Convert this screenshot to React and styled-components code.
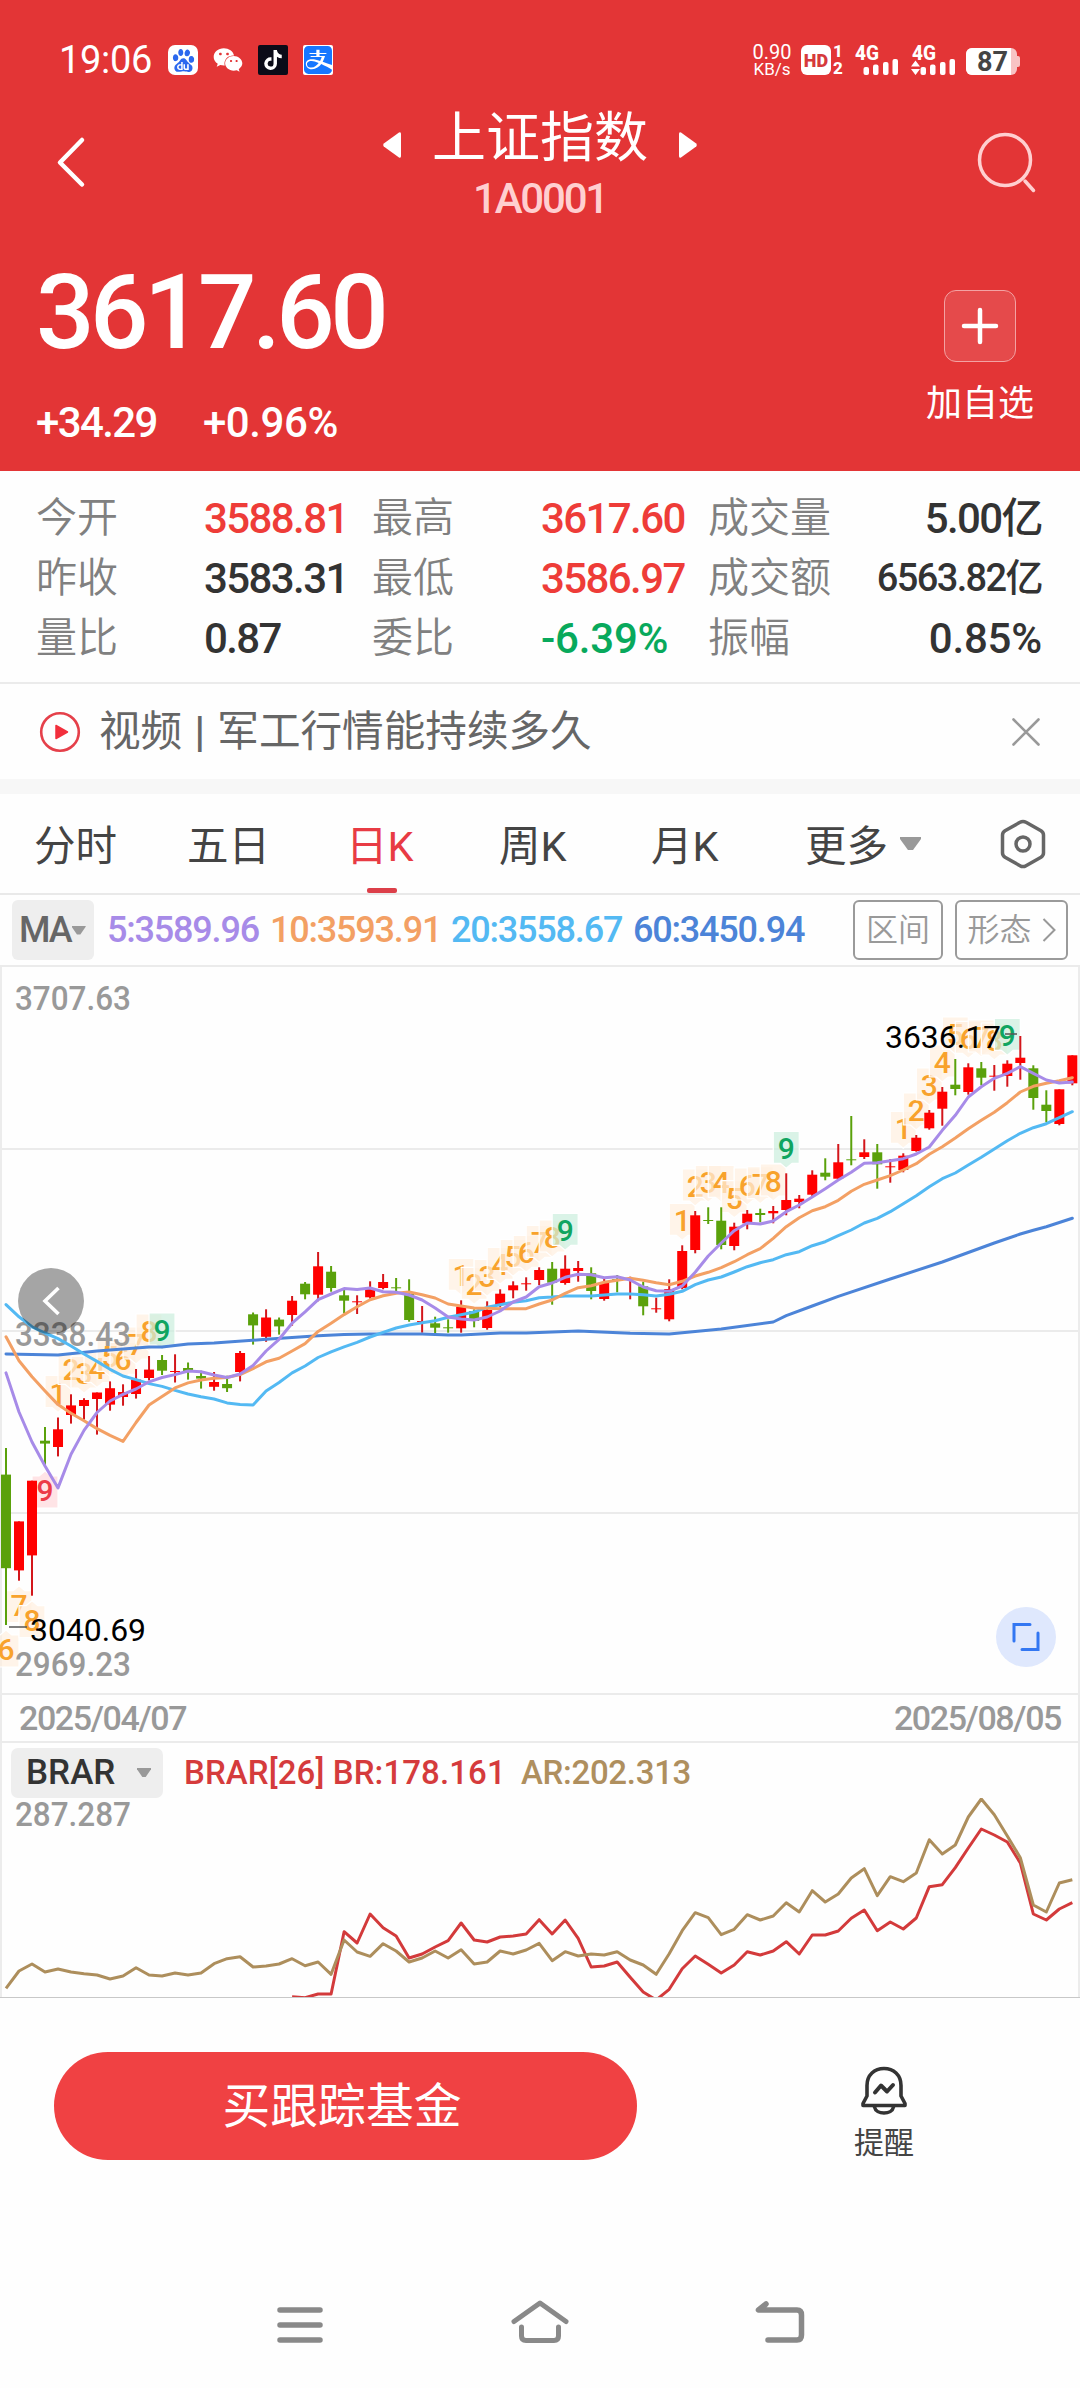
import React from 'react'
import styled, { createGlobalStyle } from 'styled-components'
import { SiBaidu } from 'react-icons/si'
import { FaWeixin, FaTiktok, FaAlipay } from 'react-icons/fa6'

const UP = '#ff0000'
const DOWN = '#5aa10b'

// [direction, high, body top, body bottom, low]
const candles = [
  ['d', 1448, 1474.6, 1568.2, 1625], ['u', 1521.4, 1521.4, 1570.4, 1580.7], ['u', 1480.7, 1480.7, 1555.4, 1595.7],
  ['d', 1427, 1440.7, 1443.6, 1466], ['u', 1417.5, 1429.3, 1447, 1456.4], ['u', 1394.3, 1405.4, 1415, 1423.6],
  ['u', 1398.2, 1400, 1406, 1419.6], ['u', 1392.5, 1392.5, 1399, 1434.6], ['u', 1381.4, 1388.2, 1404.6, 1410.7],
  ['u', 1384.3, 1392, 1397, 1405.7], ['u', 1369, 1379.6, 1394, 1398.6], ['u', 1356, 1369.6, 1378, 1380.4],
  ['d', 1355, 1360, 1370.7, 1375], ['u', 1354.3, 1371, 1372, 1382.5], ['d', 1362.5, 1368, 1371, 1379.6],
  ['d', 1370.7, 1376, 1378.6, 1388.6], ['u', 1372, 1382, 1386.8, 1390.7], ['d', 1375.7, 1384, 1388.2, 1392],
  ['u', 1351, 1353, 1372, 1381.4], ['d', 1312.5, 1314.3, 1325.4, 1344.6], ['u', 1309.3, 1317.5, 1336.8, 1341.8],
  ['d', 1317.5, 1319.6, 1326.4, 1334.6], ['u', 1296, 1300.7, 1315, 1325.7], ['d', 1282, 1283.7, 1294.3, 1299.3],
  ['u', 1252, 1266.3, 1294.7, 1301.3], ['d', 1266, 1271.7, 1288, 1291.7], ['d', 1290, 1295.3, 1300.7, 1313.3],
  ['u', 1295.3, 1301.3, 1302.3, 1314], ['u', 1281.3, 1288.3, 1297.3, 1298.7], ['u', 1274, 1282, 1288, 1289.3],
  ['d', 1278, 1287.3, 1288.3, 1291.7], ['d', 1279.3, 1294, 1320, 1321.7], ['u', 1306, 1321, 1321.7, 1332.7],
  ['d', 1316.7, 1323.3, 1327.7, 1335.3], ['d', 1319.3, 1327.3, 1328.3, 1332.7], ['u', 1300.3, 1306.7, 1328.3, 1332.7],
  ['d', 1309.3, 1311, 1321, 1327.3], ['u', 1301.3, 1310, 1328, 1329.7], ['u', 1289.3, 1293.7, 1305, 1307.3],
  ['u', 1281.3, 1285.3, 1290.3, 1298.3], ['u', 1277.3, 1283.3, 1284.3, 1290.7], ['u', 1267.3, 1270, 1280, 1285],
  ['d', 1262, 1268.7, 1282.7, 1304.7], ['u', 1255.3, 1268.7, 1283, 1284.7], ['u', 1261, 1268, 1271, 1281.7],
  ['d', 1267.3, 1273.3, 1291, 1299.3], ['u', 1278.3, 1282.3, 1299, 1300.7], ['d', 1275, 1279, 1280, 1292.3],
  ['u', 1276.7, 1278, 1279.7, 1299.3], ['d', 1281.7, 1286.3, 1306.3, 1315.3], ['u', 1297.7, 1308.3, 1309.3, 1312.7],
  ['u', 1279.3, 1289, 1319.3, 1321.3], ['u', 1245.3, 1251, 1288, 1289.3], ['u', 1211, 1215.3, 1250, 1253.3],
  ['d', 1207.3, 1220, 1221, 1224], ['d', 1207.3, 1220.7, 1245, 1249.3], ['u', 1222.7, 1226.7, 1246, 1250.3],
  ['u', 1210, 1213.7, 1223.3, 1229.3], ['d', 1208.7, 1213, 1215, 1222.3], ['u', 1206, 1211, 1213.3, 1223.3],
  ['u', 1173.3, 1200, 1210, 1215.3], ['u', 1195, 1198.7, 1202, 1208.3], ['u', 1170.3, 1174.7, 1194.7, 1196.7],
  ['d', 1158.3, 1172.7, 1176.7, 1180.3], ['u', 1144, 1162.3, 1178.7, 1179.5], ['d', 1116, 1159.3, 1160.3, 1165.3],
  ['u', 1139.3, 1152.3, 1157, 1159], ['d', 1144, 1152.3, 1164.3, 1188.7], ['u', 1159, 1166.3, 1167.3, 1182.7],
  ['u', 1153.3, 1155.7, 1170, 1172.3], ['u', 1135, 1137.7, 1151, 1151.7], ['u', 1110, 1112.7, 1128.3, 1129.7],
  ['u', 1087, 1091.7, 1108.7, 1125.7], ['d', 1059, 1084.7, 1089, 1095.3], ['u', 1063.3, 1067.3, 1092, 1094.7],
  ['d', 1062, 1068.3, 1077.7, 1085.3], ['u', 1065, 1075.7, 1076.7, 1090.7], ['u', 1060.3, 1063.7, 1076, 1086.7],
  ['u', 1036, 1057.7, 1063, 1079.7], ['d', 1065.3, 1068.3, 1098, 1109.7], ['d', 1090.3, 1104.7, 1111, 1122.3],
  ['u', 1089.3, 1089.3, 1124, 1125.3], ['u', 1055.3, 1055.3, 1083.3, 1085.3],
]

const ma5 = [
  1372.9, 1412, 1442, 1466, 1487.9, 1454.3, 1430.4, 1412.5, 1401, 1394.3, 1389, 1381.8, 1377.5, 1374.6, 1371, 1371.8,
  1375, 1377.5, 1374, 1365.4, 1351, 1339.3, 1323.2, 1311.8, 1299.6, 1294, 1288.6, 1289.6, 1288, 1291.7, 1292.3, 1295,
  1300, 1308, 1317, 1319, 1320, 1317, 1311, 1302, 1297, 1286.7, 1283, 1277.3, 1274.3, 1274.7, 1277.7, 1276.7,
  1280, 1287, 1290.7, 1291.3, 1286, 1272.3, 1256, 1243, 1230.7, 1223, 1224, 1221, 1211.7, 1205, 1197, 1188.7,
  1180, 1172.3, 1163.3, 1162.7, 1160.7, 1158.7, 1154, 1147, 1130.3, 1115.3, 1097, 1086.7, 1078.3, 1073.3, 1066.7,
  1073.3, 1080, 1083, 1082,
]
const ma10 = [
  1336.8, 1360.7, 1376.8, 1391, 1404.6, 1413.2, 1420.7, 1428.6, 1435.4, 1441.4, 1422.5, 1405, 1396.4, 1387.9, 1382.9,
  1380, 1378.2, 1377.5, 1374.6, 1368.6, 1361.8, 1358.2, 1351, 1343.6, 1331.4, 1323.2, 1314.6, 1306.7, 1299.7, 1295.7,
  1293.3, 1292, 1294.7, 1298, 1304, 1306, 1308, 1308.3, 1308.7, 1308.7, 1308.7, 1304, 1300, 1293.3, 1287.7, 1285.7,
  1282.3, 1280.3, 1278.3, 1280.3, 1282.7, 1284.7, 1281.3, 1276, 1272.3, 1267.7, 1261.7, 1254.7, 1248.7, 1238.3,
  1226.7, 1217.7, 1210.7, 1206.7, 1200.3, 1191.3, 1184.3, 1180, 1175.7, 1170, 1163.7, 1154.3, 1146.7, 1138, 1128.7,
  1120.3, 1112.3, 1102.7, 1092, 1086.3, 1083.3, 1080.7, 1077.7,
]
const ma20 = [
  1304.6, 1316.8, 1326.8, 1333, 1338.6, 1346, 1354, 1361.4, 1369.3, 1376, 1379.6, 1383.6, 1386.4, 1390.4, 1394, 1396.8,
  1399, 1402.9, 1404.6, 1405, 1391, 1382.5, 1372.9, 1366, 1357.5, 1351.8, 1346.8, 1342.3, 1337, 1332.3, 1328, 1325,
  1322.7, 1320.7, 1317.3, 1314.7, 1312, 1307.3, 1304.7, 1302.3, 1300.7, 1297.7, 1297, 1296, 1296, 1296, 1295, 1294,
  1294, 1294.7, 1296, 1294.3, 1291.3, 1284.7, 1280, 1277, 1272, 1266.7, 1262.7, 1259.7, 1254.7, 1251.7, 1245.7,
  1241.7, 1235.7, 1230, 1223, 1218.3, 1211.7, 1203.7, 1195.7, 1186.7, 1178.7, 1173, 1165, 1157.3, 1149, 1140.7,
  1133.3, 1127.7, 1123.7, 1117.7, 1111.7,
]
const ma60 = [
  [0, 1354], [4, 1355], [7, 1351], [11, 1347], [12, 1347], [14, 1344], [16, 1343], [20, 1339.3], [24, 1335.7],
  [26, 1334.6], [28, 1334], [32, 1334], [34, 1335], [35, 1335], [38, 1333], [40, 1333], [42, 1332], [44, 1331],
  [48, 1333.3], [51, 1334], [55, 1329], [59, 1322], [60, 1315.7], [62, 1306], [64, 1296.3], [68, 1279], [72, 1262],
  [76, 1243], [78, 1234], [79, 1230.3], [80, 1226.7], [82, 1218.3],
]
const ar = [
  1988.3, 1971, 1964, 1972, 1969, 1972, 1973.7, 1975, 1979, 1976, 1967.7, 1975, 1976, 1973, 1975, 1973, 1963.7, 1958.7,
  1956.7, 1967, 1966, 1964, 1958.7, 1965.7, 1962, 1974.3, 1940, 1952, 1956.3, 1943.7, 1951, 1962, 1958, 1951, 1958,
  1949.7, 1964, 1962, 1951, 1954, 1950, 1943.3, 1960.7, 1951.7, 1956, 1954, 1955, 1951.7, 1960, 1965, 1974.3, 1953.7,
  1930.7, 1912.7, 1917.7, 1934.7, 1929.3, 1914.7, 1920, 1916, 1902.7, 1912, 1890.7, 1902, 1894, 1878, 1868.7, 1895.7,
  1876.7, 1881.7, 1873, 1839.7, 1854, 1845, 1817, 1799, 1814.7, 1836, 1857.7, 1905, 1912, 1883, 1879.7,
]
const br = [
  1996.7, 1997.7, 1994, 1994, 1931.7, 1943, 1914, 1927.7, 1936, 1958, 1954, 1947, 1940.7, 1923, 1940, 1942, 1937, 1936,
  1934, 1919.7, 1934, 1920, 1938.3, 1967, 1966, 1962, 1977.3, 1992, 2000, 1989.3, 1968.7, 1956, 1964.3, 1973, 1965,
  1951.7, 1955, 1951, 1941.7, 1954, 1935, 1935, 1931, 1918.3, 1910, 1930.7, 1922, 1929, 1918, 1886.7, 1884.7, 1867.7,
  1848, 1829, 1835, 1842, 1863, 1914, 1920, 1909, 1902.7,
]

const markers = [
  { i: 0, n: 6, below: true },
  { i: 1, n: 7, below: true },
  { i: 2, n: 8, below: true },
  { i: 3, n: 9, below: true },
]
;[4, 35, 52, 69].forEach((start) => {
  for (let k = 0; k < 9; k++) markers.push({ i: start + k, n: k + 1 })
})

const xAt = (i) => 6 + i * 13.004
const toPoints = (list, from = 0) => list.map((y, i) => `${xAt(i + from)},${y}`).join(' ')

const quotes = [
  { label: '今开', value: '3588.81', color: '#ee3c38' },
  { label: '最高', value: '3617.60', color: '#ee3c38' },
  { label: '成交量', value: '5.00亿', end: true },
  { label: '昨收', value: '3583.31' },
  { label: '最低', value: '3586.97', color: '#ee3c38' },
  { label: '成交额', value: '6563.82亿', end: true, small: true },
  { label: '量比', value: '0.87' },
  { label: '委比', value: '-6.39%', color: '#08a95c', wide: true },
  { label: '振幅', value: '0.85%', end: true, wide: true },
]

const averages = [
  { text: '5:3589.96', color: '#a78be8', width: 163 },
  { text: '10:3593.91', color: '#f3a064', width: 181 },
  { text: '20:3558.67', color: '#53b9f3', width: 182 },
  { text: '60:3450.94', color: '#4c84d8', width: 180 },
]

const Marker = ({ i, n, below }) => {
  const x = xAt(i)
  const tip = below ? candles[i][4] + 5 : candles[i][1] - 5
  const s = below ? -1 : 1
  const fill = n < 9 ? '#fff0e0' : below ? '#ffd9dc' : '#caeedd'
  const color = n < 9 ? '#f8a22c' : below ? '#ec3b48' : '#10a560'
  const d = `M${x} ${tip}l-6 ${-5 * s}h-7v${-32 * s}h26v${32 * s}h-7z`
  return (
    <g>
      <path d={d} fill={fill} fillOpacity="0.7" stroke="#fff" strokeWidth="1.2" strokeLinejoin="round" />
      <MarkerText x={x} y={tip - 19.5 * s + 10.5} fill={color}>{n}</MarkerText>
    </g>
  )
}

const Candle = ({ i, data }) => {
  const [dir, high, top, bottom, low] = data
  const color = dir === 'u' ? UP : DOWN
  const x = xAt(i)
  return (
    <g>
      <line x1={x} x2={x} y1={high} y2={low} stroke={dir === 'u' ? '#d3161b' : color} strokeWidth="2" />
      <rect x={x - 5} y={top} width="10" height={Math.max(bottom - top, 1)} fill={color} />
    </g>
  )
}

const KLineChart = () => (
  <ChartSvg viewBox="0 967 1080 728" width="1080" height="728">
    {[1149, 1331, 1513].map((y) => (
      <line key={y} x1="0" x2="1080" y1={y} y2={y} stroke="#ebebeb" strokeWidth="2" />
    ))}
    <path d="M1 967V1695M1079 967V1695" stroke="#ececec" strokeWidth="2" />
    {markers.map((m) => <Marker key={m.i} {...m} />)}
    {candles.map((c, i) => <Candle key={i} i={i} data={c} />)}
    <AxisText x="15" y="1010" textLength="116" lengthAdjust="spacingAndGlyphs">3707.63</AxisText>
    <AxisText x="15" y="1346" textLength="116" lengthAdjust="spacingAndGlyphs">3338.43</AxisText>
    <AxisText x="15" y="1676" textLength="116" lengthAdjust="spacingAndGlyphs">2969.23</AxisText>
    <g fill="none" strokeWidth="3" strokeLinejoin="round" strokeLinecap="round">
      <polyline points={ma60.map(([i, y]) => `${xAt(i)},${y}`).join(' ')} stroke="#4c84d8" />
      <polyline points={toPoints(ma20)} stroke="#53b9f3" />
      <polyline points={toPoints(ma10)} stroke="#f3a064" />
      <polyline points={toPoints(ma5)} stroke="#a78be8" />
    </g>
    <path d="M9 1627h18M1005 1034h12" stroke="#555" strokeWidth="1.5" />
    <PeakText x="30" y="1640.5" textLength="116" lengthAdjust="spacingAndGlyphs">3040.69</PeakText>
    <PeakText x="885" y="1048" textLength="116" lengthAdjust="spacingAndGlyphs">3636.17</PeakText>
  </ChartSvg>
)

const BrarChart = () => (
  <ChartSvg viewBox="0 1798 1080 199" width="1080" height="199">
    <path d="M1 1798V1997M1079 1798V1997" stroke="#ececec" strokeWidth="2" />
    <AxisText x="15" y="1825.5" textLength="116" lengthAdjust="spacingAndGlyphs">287.287</AxisText>
    <g fill="none" strokeWidth="3" strokeLinejoin="round">
      <polyline points={toPoints(br, 22)} stroke="#d33a3b" />
      <polyline points={toPoints(ar)} stroke="#ad8e5c" />
    </g>
  </ChartSvg>
)

const Signal = ({ arrows }) => (
  <svg width="46" height="34" viewBox="0 -4 46 34" fill="#fff">
    <SignalText x="1" y="14.500" textLength="24" lengthAdjust="spacingAndGlyphs">4G</SignalText>
    <rect x="9.500" y="22" width="5.500" height="8" rx="2" />
    <rect x="19" y="19.500" width="5.500" height="10.500" rx="2" />
    <rect x="29" y="17" width="5.500" height="13" rx="2" />
    <rect x="38.500" y="14" width="5.500" height="16" rx="2" />
    {arrows && <path d="M4.500 15.500l4.500 6h-9zM4.500 30l4.500-6h-9z" />}
  </svg>
)

export default function App() {
  return (
    <>
      <GlobalStyle />
      <Page>
        <Header>
          <StatusBar>
            <Clock>19:06</Clock>
            <AppIcon $bg="#fff" $color="#2c68ee"><SiBaidu size={23} /></AppIcon>
            <AppIcon $color="#fff"><FaWeixin size={30} /></AppIcon>
            <AppIcon $bg="#0b0b18" $color="#fff" $square><FaTiktok size={20} /></AppIcon>
            <AppIcon $bg="#fff" $color="#1677ff" $square><FaAlipay size={32} /></AppIcon>
            <NetSpeed><span>0.90</span><small>KB/s</small></NetSpeed>
            <HdBadge>HD</HdBadge>
            <SimNumbers><span>1</span><span>2</span></SimNumbers>
            <SignalSlot $width={57}><Signal /></SignalSlot>
            <SignalSlot $width={55}><Signal arrows /></SignalSlot>
            <Battery><BatteryLevel>87</BatteryLevel></Battery>
          </StatusBar>
          <NavBar>
            <svg width="32" height="54" viewBox="0 0 32 54" fill="none" stroke="#fff" strokeWidth="4.500" strokeLinecap="round" strokeLinejoin="round">
              <path d="M27 5L5 27.500L27 49.500" />
            </svg>
            <TitleBlock>
              <TitleRow>
                <svg width="20" height="28" viewBox="0 0 20 28" fill="#fff"><path d="M17 1.500Q19 .5 19 3V25Q19 27.500 17 26.500L1.800 15.500Q.5 14 1.800 12.500z" /></svg>
                <Title>上证指数</Title>
                <svg width="20" height="28" viewBox="0 0 20 28" fill="#fff"><path d="M3 1.500Q1 .5 1 3V25Q1 27.500 3 26.500L18.200 15.500Q19.500 14 18.200 12.500z" /></svg>
              </TitleRow>
              <Code>1A0001</Code>
            </TitleBlock>
            <svg width="62" height="62" viewBox="0 0 62 62" fill="none" stroke="#ffcfd0" strokeWidth="3.500" strokeLinecap="round">
              <ellipse cx="29" cy="29" rx="25.500" ry="25.500" />
              <path d="M49 50L57.500 59.500" />
            </svg>
          </NavBar>
          <PriceArea>
            <div>
              <Price>3617.60</Price>
              <Changes><Change>+34.29</Change><Change $wide>+0.96%</Change></Changes>
            </div>
            <AddStock>
              <AddIcon>
                <svg width="38" height="38" viewBox="0 0 38 38" stroke="#fff" strokeWidth="4.500" strokeLinecap="round"><path d="M19 3V35M3 19H35" /></svg>
              </AddIcon>
              加自选
            </AddStock>
          </PriceArea>
        </Header>

        <Quotes>
          {quotes.map((q) => (
            <React.Fragment key={q.label}>
              <QuoteLabel>{q.label}</QuoteLabel>
              <QuoteValue $color={q.color} $end={q.end} $small={q.small} $wide={q.wide}>{q.value}</QuoteValue>
            </React.Fragment>
          ))}
        </Quotes>

        <VideoBar>
          <svg width="42" height="42" viewBox="0 0 42 42">
            <circle cx="21" cy="21" r="18.800" fill="none" stroke="#e5404a" strokeWidth="2.600" />
            <path d="M17 14.500L28.500 21L17 27.500z" fill="#f22f3c" stroke="#f22f3c" strokeWidth="1.500" strokeLinejoin="round" />
          </svg>
          <VideoTitle>视频 <b>|</b> 军工行情能持续多久</VideoTitle>
          <svg width="30" height="30" viewBox="0 0 30 30" stroke="#999" strokeWidth="2.600" strokeLinecap="round"><path d="M2.500 2.500L27.500 27.500M27.500 2.500L2.500 27.500" /></svg>
        </VideoBar>

        <Tabs>
          <Tab $width={153}>分时</Tab>
          <Tab $width={159}>五日</Tab>
          <Tab $width={153} $active>日K</Tab>
          <Tab $width={152}>周K</Tab>
          <Tab $width={154}>月K</Tab>
          <Tab $width={95}>更多</Tab>
          <Caret $w={21} $h={13} />
          <SettingIcon width="46" height="50" viewBox="0 0 46 50" fill="none" stroke="#666" strokeWidth="3.500" strokeLinejoin="round">
            <path d="M20 3.300Q23 1.500 26 3.300L41 11.800Q43.500 13.500 43.500 16V34Q43.500 36.500 41 38.200L26 46.700Q23 48.500 20 46.700L5 38.200Q2.500 36.500 2.500 34V16Q2.500 13.500 5 11.800z" />
            <circle cx="23" cy="25" r="7" />
          </SettingIcon>
        </Tabs>

        <MaRow>
          <MaSelect>MA<Caret $w={14} $h={9} /></MaSelect>
          {averages.map((a) => (
            <Average key={a.text} $color={a.color} $width={a.width}>{a.text}</Average>
          ))}
          <OutlineButton $width={90}>区间</OutlineButton>
          <OutlineButton $width={113}>
            形态
            <svg width="14" height="28" viewBox="0 0 14 28" fill="none" stroke="#999" strokeWidth="2"><path d="M1.500 3L12.500 14L1.500 25" /></svg>
          </OutlineButton>
        </MaRow>

        <ChartPanel>
          <KLineChart />
          <PrevButton>
            <svg width="22" height="34" viewBox="0 0 22 34" fill="none" stroke="#fff" strokeWidth="3.600"><path d="M18.500 4L5 17L18.500 30" /></svg>
          </PrevButton>
          <ExpandButton>
            <svg width="30" height="30" viewBox="0 0 30 30" fill="none" stroke="#3377f2" strokeWidth="3" strokeLinecap="round"><path d="M3 19V2.500H19M27 11V27.500H11" /></svg>
          </ExpandButton>
        </ChartPanel>
        <DateRow><span>2025/04/07</span><span>2025/08/05</span></DateRow>

        <BrarHead>
          <BrarSelect>BRAR<Caret $w={14} $h={9} /></BrarSelect>
          <BrarText $color="#d53b3c" $width={337} $spacing={0.1}>BRAR[26] BR:178.161</BrarText>
          <BrarText $color="#af8f5e" $spacing={-0.3}>AR:202.313</BrarText>
        </BrarHead>
        <BrarPanel><BrarChart /></BrarPanel>

        <ActionBar>
          <BuyButton>买跟踪基金</BuyButton>
          <Remind>
            <svg width="50" height="52" viewBox="0 0 50 52" fill="none" stroke="#333" strokeWidth="3.600" strokeLinejoin="round" strokeLinecap="round">
              <path d="M8 20.500C8 10 15.500 3.500 25 3.500S42 10 42 20.500V31L46 38.500V40.500H4V38.500L8 31z" />
              <path d="M15.500 42C17 50 33 50 34.500 42" />
              <path d="M16 27.500L22 20.500L28 26.500L34 20" strokeWidth="4" />
            </svg>
            提醒
          </Remind>
        </ActionBar>

        <SystemNav>
          <svg width="60" height="54" viewBox="0 0 60 54" stroke="#898989" strokeWidth="5.500" strokeLinecap="round"><path d="M10 12H50M10 27H50M10 42H50" /></svg>
          <svg width="60" height="54" viewBox="0 0 60 54" fill="none" stroke="#898989" strokeWidth="5" strokeLinecap="round" strokeLinejoin="round"><path d="M4 23.500L30 5L56 23.500M11.500 29V38Q11.500 42.500 16 42.500H44Q48.500 42.500 48.500 38V29" /></svg>
          <svg width="60" height="54" viewBox="0 0 60 54" fill="none" stroke="#898989" strokeWidth="5.500" strokeLinecap="round" strokeLinejoin="round"><path d="M16 6L8.500 12H47Q51.500 12 51.500 17V37Q51.500 42 47 42H18" /></svg>
        </SystemNav>
      </Page>
    </>
  )
}

const GlobalStyle = createGlobalStyle`
  * { box-sizing: border-box; }
  body {
    margin: 0;
    background: #fefefe;
  }
  svg { display: block; flex: none; }
`
const Page = styled.div`
  width: 1080px;
  height: 2388px;
  display: flex;
  flex-direction: column;
  overflow: hidden;
  background: #fefefe;
  color: #444;
  font-family: Roboto, 'Noto Sans CJK SC', sans-serif;
`
const Header = styled.header`
  height: 471px;
  background: #e33536;
  color: #fff;
`
const StatusBar = styled.div`
  height: 90px;
  padding: 30px 58px 0 59px;
  display: flex;
  align-items: center;
`
const Clock = styled.div`
  width: 109px;
  font-size: 38px;
  letter-spacing: -0.3px;
`
const AppIcon = styled.span`
  width: 30px;
  height: 30px;
  margin-right: 15px;
  display: flex;
  flex: none;
  align-items: center;
  justify-content: center;
  overflow: hidden;
  border-radius: ${(p) => (p.$square ? '2px' : '7px')};
  background: ${(p) => p.$bg || 'transparent'};
  color: ${(p) => p.$color};
`
const NetSpeed = styled.div`
  width: 46px;
  margin-left: auto;
  display: flex;
  flex-direction: column;
  align-items: center;
  font-size: 20px;
  line-height: 17px;
  small {
    font-size: 17px;
    line-height: 16px;
  }
`
const HdBadge = styled.div`
  width: 30px;
  height: 30px;
  margin-left: 6px;
  border-radius: 6px;
  background: #fff;
  color: #d63a3c;
  font-size: 18px;
  font-weight: 900;
  line-height: 31px;
  text-align: center;
`
const SimNumbers = styled.div`
  width: 12px;
  margin: 0 10px 0 1px;
  display: flex;
  flex-direction: column;
  align-items: center;
  font-size: 17px;
  font-weight: 800;
  line-height: 17px;
`
const SignalSlot = styled.div`
  width: ${(p) => p.$width}px;
  margin-top: -4px;
  flex: none;
`
const SignalText = styled.text`
  font: 800 20px Roboto, sans-serif;
`
const Battery = styled.div`
  width: 51px;
  height: 27px;
  margin: 2px 5px 0 0;
  border-radius: 6px;
  background: #f8c3c4;
  position: relative;
  &::after {
    content: '';
    position: absolute;
    right: -3px;
    top: 8px;
    width: 3px;
    height: 11px;
    border-radius: 0 2px 2px 0;
    background: #f8c3c4;
  }
`
const BatteryLevel = styled.div`
  width: 45px;
  height: 27px;
  padding-left: 8px;
  border-radius: 6px 0 0 6px;
  background: #fff;
  color: #444;
  font-size: 27px;
  font-weight: 700;
  line-height: 28px;
  text-align: center;
`
const NavBar = styled.nav`
  height: 150px;
  padding: 18px 42px 0 55px;
  display: flex;
  align-items: flex-start;
  justify-content: space-between;
  > svg:first-child { margin: 27px 30px 0 0; }
  > svg:last-child { margin-top: 23px; }
`
const TitleBlock = styled.div`
  display: flex;
  flex-direction: column;
  align-items: center;
  margin-left: -13px;
`
const TitleRow = styled.div`
  display: flex;
  svg { margin-top: 23px; }
`
const Title = styled.h1`
  margin: 0 30px;
  font-size: 54px;
  font-weight: 400;
  line-height: 62px;
`
const Code = styled.div`
  margin-top: 9px;
  font-size: 42px;
  font-weight: 500;
  line-height: 40px;
  letter-spacing: -2.2px;
  color: #ffcfd0;
`
const PriceArea = styled.section`
  padding: 17px 46px 0 36px;
  display: flex;
  justify-content: space-between;
`
const Price = styled.div`
  font-size: 103px;
  font-weight: 500;
  line-height: 111px;
  letter-spacing: -4.5px;
`
const Changes = styled.div`
  margin-top: 30px;
  display: flex;
  gap: 46px;
`
const Change = styled.span`
  font-size: 42px;
  font-weight: 500;
  line-height: 50px;
  letter-spacing: ${(p) => (p.$wide ? -0.4 : -1.6)}px;
`
const AddStock = styled.div`
  padding-top: 33px;
  display: flex;
  flex-direction: column;
  align-items: center;
  font-size: 36px;
  line-height: 45px;
`
const AddIcon = styled.div`
  width: 72px;
  height: 72px;
  margin-bottom: 20px;
  display: flex;
  align-items: center;
  justify-content: center;
  border: 1.5px solid #f3a2a3;
  border-radius: 12px;
  background: #e54a4b;
`
const Quotes = styled.section`
  height: 213px;
  padding: 17px 38px 0 37px;
  display: grid;
  grid-template-columns: 167px 169px 168px 168px 130px 1fr;
  grid-auto-rows: 60px;
  border-bottom: 2px solid #ebebeb;
`
const QuoteLabel = styled.div`
  font-size: 41px;
  font-weight: 350;
  line-height: 61px;
  margin-left: -1px;
  white-space: nowrap;
  color: #808080;
`
const QuoteValue = styled.div`
  font-size: ${(p) => (p.$small ? 38 : 42)}px;
  font-weight: 500;
  line-height: 61px;
  letter-spacing: ${(p) => (p.$wide ? -0.2 : -1.6)}px;
  white-space: nowrap;
  text-align: ${(p) => (p.$end ? 'right' : 'left')};
  color: ${(p) => p.$color || '#333'};
`
const VideoBar = styled.section`
  height: 110px;
  padding: 0 39px 0 39px;
  display: flex;
  align-items: center;
  border-bottom: 15px solid #f7f7f7;
`
const VideoTitle = styled.div`
  margin-left: 18px;
  flex: 1;
  font-size: 41.6px;
  line-height: 60px;
  color: #666;
  b {
    margin: 0 2px;
    font-weight: 700;
  }
`
const Tabs = styled.div`
  height: 101px;
  padding: 0 34px 0 34px;
  display: flex;
  align-items: center;
  border-bottom: 2px solid #e9e9e9;
`
const Tab = styled.div`
  width: ${(p) => p.$width}px;
  height: 99px;
  flex: none;
  font-size: 41.5px;
  line-height: 106px;
  position: relative;
  color: ${(p) => (p.$active ? '#e83b44' : '#444')};
  ${(p) => p.$active && `
    &::after {
      content: '';
      position: absolute;
      left: 21px;
      bottom: 0;
      width: 30px;
      height: 5px;
      border-radius: 2px;
      background: #dc3f49;
    }
  `}
`
const Caret = styled.span`
  width: ${(p) => p.$w}px;
  height: ${(p) => p.$h}px;
  flex: none;
  background: #999;
  clip-path: polygon(0 0, 100% 0, 100% 15%, 62% 100%, 38% 100%, 0 15%);
`
const SettingIcon = styled.svg`
  margin-left: auto;
`
const MaRow = styled.div`
  height: 72px;
  padding: 0 12px;
  display: flex;
  align-items: center;
  border-bottom: 2px solid #ebebeb;
`
const MaSelect = styled.div`
  width: 82px;
  height: 60px;
  margin-right: 13px;
  padding-left: 7px;
  display: flex;
  flex: none;
  align-items: center;
  gap: 1px;
  border-radius: 6px;
  background: #eee;
  color: #666;
  font-size: 36px;
  font-weight: 500;
  letter-spacing: -2px;
`
const Average = styled.span`
  width: ${(p) => p.$width}px;
  flex: none;
  font-size: 36px;
  font-weight: 500;
  letter-spacing: -1.2px;
  white-space: nowrap;
  color: ${(p) => p.$color};
`
const OutlineButton = styled.div`
  width: ${(p) => p.$width}px;
  height: 60px;
  margin-left: ${(p) => (p.$width > 100 ? 12 : 40)}px;
  display: flex;
  flex: none;
  align-items: center;
  justify-content: center;
  gap: 10px;
  border: 2px solid #9a9a9a;
  border-radius: 6px;
  color: #999;
  font-size: 32px;
  font-weight: 350;
  line-height: 56px;
`
const ChartPanel = styled.section`
  height: 728px;
  position: relative;
  border-bottom: 2px solid #ebebeb;
`
const ChartSvg = styled.svg`
  overflow: hidden;
`
const AxisText = styled.text`
  font: 500 33px Roboto, sans-serif;
  fill: #999;
`
const PeakText = styled.text`
  font: 400 32px Roboto, sans-serif;
  fill: #000;
`
const MarkerText = styled.text`
  font: 500 30px Roboto, sans-serif;
  text-anchor: middle;
`
const PrevButton = styled.div`
  position: absolute;
  left: 18px;
  top: 301px;
  width: 66px;
  height: 66px;
  display: flex;
  align-items: center;
  justify-content: center;
  border-radius: 50%;
  background: rgba(0, 0, 0, 0.35);
`
const ExpandButton = styled.div`
  position: absolute;
  right: 24px;
  top: 640px;
  width: 60px;
  height: 60px;
  display: flex;
  align-items: center;
  justify-content: center;
  border-radius: 50%;
  background: #dfe8fd;
`
const DateRow = styled.div`
  height: 48px;
  padding: 0 17px;
  display: flex;
  align-items: center;
  justify-content: space-between;
  border: 2px solid #ebebeb;
  border-top: 0;
  color: #999;
  font-size: 34px;
  font-weight: 500;
  letter-spacing: -1.4px;
`
const BrarHead = styled.div`
  height: 55px;
  padding: 4px 0 0 9px;
  display: flex;
  align-items: center;
  border: solid #ececec;
  border-width: 0 2px;
`
const BrarSelect = styled.div`
  width: 152px;
  height: 50px;
  margin-right: 21px;
  padding: 0 12px 0 15px;
  display: flex;
  flex: none;
  align-items: center;
  justify-content: space-between;
  border-radius: 7px;
  background: #eee;
  color: #333;
  font-size: 35px;
  font-weight: 500;
`
const BrarText = styled.span`
  width: ${(p) => (p.$width ? `${p.$width}px` : 'auto')};
  font-size: 33px;
  font-weight: 500;
  letter-spacing: ${(p) => p.$spacing}px;
  white-space: nowrap;
  color: ${(p) => p.$color};
`
const BrarPanel = styled.section`
  height: 200px;
  border-bottom: 1px solid #c8c8c8;
`
const ActionBar = styled.section`
  height: 216px;
  padding: 54px 166px 54px 54px;
  display: flex;
  justify-content: space-between;
`
const BuyButton = styled.div`
  width: 583px;
  height: 108px;
  padding-right: 7px;
  border-radius: 54px;
  background: #f04143;
  color: #fff;
  font-size: 47.8px;
  line-height: 111px;
  text-align: center;
`
const Remind = styled.div`
  padding-top: 13px;
  display: flex;
  flex-direction: column;
  align-items: center;
  font-size: 30px;
  line-height: 51px;
`
const SystemNav = styled.div`
  flex: 1;
  padding: 84px 270px 0;
  display: flex;
  justify-content: space-between;
`
